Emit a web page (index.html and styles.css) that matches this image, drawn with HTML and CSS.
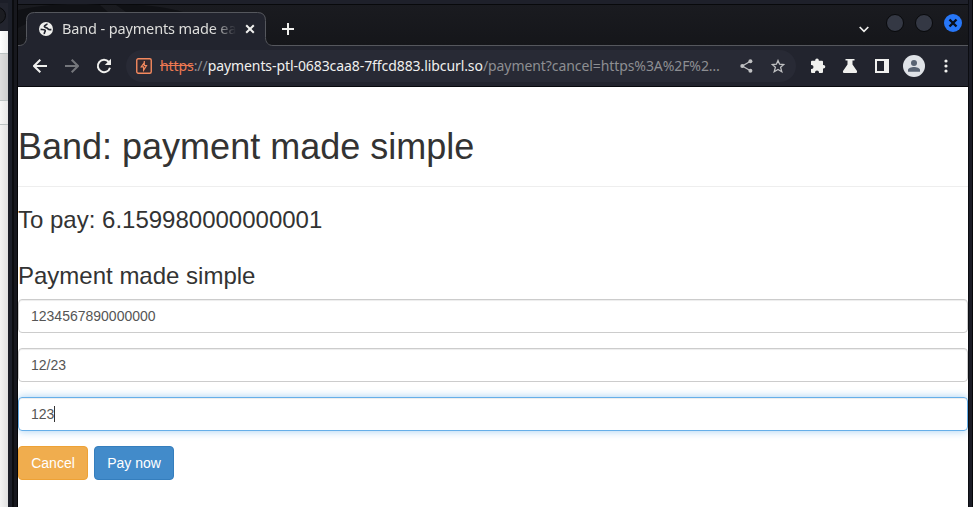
FILE: index.html
```html
<!DOCTYPE html>
<html lang="en">
<head>
<meta charset="utf-8">
<title>Band - payments made easy</title>
<link rel="stylesheet" href="styles.css">
</head>
<body>
<div class="desktop">
  <aside class="behind">
    <div class="behind-top"><i class="behind-dot"></i></div>
    <div class="behind-row behind-tab"></div>
    <div class="behind-row behind-bar"></div>
    <div class="behind-row behind-tools"></div>
    <div class="behind-body"></div>
  </aside>
  <div class="edge edge-left"></div>
  <main class="window">
    <div class="tabstrip">
      <svg class="tab-shape" width="950" height="42" viewBox="0 0 950 42">
        <path class="swirl" d="M0 6C25 1 55-2 82 1L90 8H22C14 8 8 14 8 20L0 24ZM98 1 108 8H165C150 4 130 0 98 1Z"/>
        <path class="tab-fill" d="M0 41.500H1C6 41.500 8.500 38 8.500 33.500V16.500Q8.500 8.500 16.500 8.500H239.500Q247.500 8.500 247.500 16.500V33.500C247.500 38 250 41.500 255 41.500H950V43H0Z"/>
        <path class="tab-line" d="M0 41.500H1C6 41.500 8.500 38 8.500 33.500V16.500Q8.500 8.500 16.500 8.500H239.500Q247.500 8.500 247.500 16.500V33.500C247.500 38 250 41.500 255 41.500H950"/>
      </svg>
      <div class="tab">
        <svg class="globe" width="14" height="14" viewBox="0 0 14 14"><circle cx="7" cy="7" r="7" fill="#f0f0ee"/><path d="M8.200 1.600C8 3 5.300 2.900 5.300 4.600 5.300 6 8.500 5.200 9 7 9.800 7.900 11 7.500 12.400 7.600M1.600 7.400C3.500 7.600 6.300 7 6.300 8.800 6.300 9.700 5 10 5.300 12.200" fill="none" stroke="#22242e" stroke-width="1.600"/></svg>
        <span class="tab-title">Band - payments made eas</span>
        <svg class="tab-close" width="10" height="10" viewBox="0 0 10 10"><path d="M1.200 1.200 8.800 8.800M8.800 1.200 1.200 8.800"/></svg>
      </div>
      <svg class="new-tab" width="12" height="12" viewBox="0 0 12 12"><path d="M6 0V12M0 6H12"/></svg>
      <div class="controls">
        <svg class="chevron" width="10" height="7" viewBox="0 0 10 7"><path d="M.7 1 5 5.300 9.300 1"/></svg>
        <i class="dot"></i><i class="dot"></i>
        <svg class="win-close" width="18" height="18" viewBox="0 0 18 18"><circle cx="9" cy="9" r="9" fill="#2777f8"/><path d="M5.500 5.500 12.500 12.500M12.500 5.500 5.500 12.500" stroke="#080e1c" stroke-width="2.400"/></svg>
      </div>
    </div>
    <div class="toolbar">
      <svg class="nav back" width="14" height="14" viewBox="0 0 14 14"><path d="M14 7H1M7.300.7 1 7 7.300 13.300"/></svg>
      <svg class="nav forward" width="14" height="14" viewBox="0 0 14 14"><path d="M0 7H13M6.700.7 13 7 6.700 13.300"/></svg>
      <svg class="nav reload" width="16" height="16" viewBox="0 0 16 16"><path d="M12.800 4A6.200 6.200 0 1 0 14 9.700"/><path class="solid" d="M15 .8V7H8.800Z"/></svg>
      <div class="address">
        <svg class="badge" width="16" height="16" viewBox="0 0 16 16"><rect x=".75" y=".75" width="14.500" height="14.500" rx="1.500" fill="#33292f" stroke="#f4895f" stroke-width="1.400"/><path d="M8.300 3V7.500H10.500L7.600 12.200V8.800H5.200L8.300 4.500" fill="none" stroke="#f4895f" stroke-width="1.200"/></svg>
        <span class="url"><s>https</s><span class="dim">://</span><span class="host">payments-ptl-0683caa8-7ffcd883.libcurl.so</span><span class="dim">/payment?cancel=https%3A%2F%2…</span></span>
        <svg class="share" width="13" height="14" viewBox="0 0 13 14"><path d="M10.500 2.200 2.300 7 10.500 11.800" fill="none" stroke="#c0c1c3" stroke-width="1.300"/><g fill="#c0c1c3"><circle cx="10.400" cy="2.300" r="2"/><circle cx="2.300" cy="7" r="2"/><circle cx="10.400" cy="11.700" r="2"/></g></svg>
        <svg class="star" width="14" height="14" viewBox="0 0 14 14"><path d="M7 1.500 8.600 5.200 12.800 5.500 9.600 8.300 10.800 12.700 7 10.400 3.200 12.700 4.400 8.300 1.200 5.500 5.400 5.200Z"/></svg>
      </div>
      <div class="actions">
        <svg width="16" height="16" viewBox="0 0 16 16"><path d="M1 3.800Q1 2.800 2 2.800H5.200V2.200A1.800 1.800 0 0 1 8.800 2.200V2.800H12Q13 2.800 13 3.800V7H13.500A1.800 1.800 0 0 1 13.500 10.600H13V14Q13 15 12 15H9V14.500A2 2 0 0 0 5 14.500V15H2Q1 15 1 14V11H1.500A2 2 0 0 0 1.500 7H1Z"/></svg>
        <svg width="16" height="16" viewBox="0 0 16 16"><path d="M3.500 1H12.500V2.500H10.500V6.500L15 13Q15.600 15 14 15H2Q.4 15 1 13L5.500 6.500V2.500H3.500Z"/></svg>
        <svg width="16" height="16" viewBox="0 0 16 16"><path fill-rule="evenodd" d="M1 1H15V15H1ZM3 3V13H10V3Z"/></svg>
        <svg class="avatar" width="22" height="22" viewBox="0 0 22 22"><circle cx="11" cy="11" r="11" fill="#dfe2e7"/><circle cx="11" cy="8" r="3" fill="#596373"/><path d="M5 16.800V15C5 13 8.500 12 11 12S17 13 17 15V16.800Z" fill="#596373"/></svg>
        <svg class="more" width="4" height="14" viewBox="0 0 4 14"><circle cx="2" cy="2" r="1.600"/><circle cx="2" cy="7" r="1.600"/><circle cx="2" cy="12" r="1.600"/></svg>
      </div>
    </div>
    <section class="page">
      <h1>Band: payment made simple</h1>
      <h3 class="total">To pay: 6.159980000000001</h3>
      <h3 class="form-title">Payment made simple</h3>
      <div class="field">1234567890000000</div>
      <div class="field">12/23</div>
      <div class="field focused">123<i class="caret"></i></div>
      <div class="buttons"><button class="btn cancel">Cancel</button><button class="btn pay">Pay now</button></div>
    </section>
  </main>
  <div class="edge edge-right"></div>
</div>
</body>
</html>
```
FILE: styles.css
```css
* { box-sizing: border-box; }
body { margin: 0; overflow: hidden; background: #1c1e28; font-family: "Liberation Sans", Arial, sans-serif; }
svg { display: block; flex: none; }
.desktop { display: grid; grid-template-columns: 8px 10px 950px 5px; height: 507px; }
.behind { display: flex; flex-direction: column; overflow: hidden; }
.behind-top { height: 31px; background: #22242e; border-top: 3px solid #1c1e28; }
.behind-dot { display: block; width: 17px; height: 17px; margin: 4px 0 0 -11px; border: 1px solid #08090c; border-radius: 50%; background: #1b1c21; }
.behind-row { border-bottom: 1px solid #bcc3c3; }
.behind-tab { height: 23px; background: linear-gradient(90deg, #fff, #eee); }
.behind-bar { height: 47px; background: linear-gradient(90deg, #dedede, #cecece); }
.behind-tools { height: 24px; background: linear-gradient(90deg, #f7f7f7, #e6e6e6); }
.behind-body { flex: 1; background: linear-gradient(90deg, #f4f4f4, #e1e1e1); }
.edge-left { border-left: 4px solid #1c1f29; border-right: 1px solid #050507; background: linear-gradient(90deg, #0b0c0f 2px, #17181e 2px); }
.edge-right { border-left: 1px solid #0c0d12; border-right: 1px solid #07080b; background: #1b1d27; }
.window { display: flex; flex-direction: column; min-width: 0; border-top: 4px solid #1e202a; }
.tabstrip { position: relative; display: flex; align-items: flex-start; height: 42px; background: linear-gradient(#1a1b20, #15161a); border-top: 1px solid #08090b; }
.tab-shape { position: absolute; left: 0; top: -1px; }
.swirl { fill: #101115; }
.tab-fill { fill: #22242e; }
.tab-line { fill: none; stroke: #55575d; stroke-width: 1; }
.tab { position: relative; display: flex; align-items: center; width: 240px; height: 33px; margin: 7px 0 0 8px; padding-left: 13px; }
.tab-title { width: 176px; height: 22px; margin: -2px 0 0 9px; overflow: hidden; white-space: nowrap; font: 14.500px/22px "Noto Sans", sans-serif; letter-spacing: -.14px; color: #dededc; -webkit-mask-image: linear-gradient(90deg, #000 151px, transparent 174px); mask-image: linear-gradient(90deg, #000 151px, transparent 174px); }
.tab-close { margin-left: 7px; }
.tab-close path, .new-tab path, .chevron path { fill: none; stroke: #f0f0ee; stroke-width: 2; }
.new-tab { position: relative; margin: 18px 0 0 16px; }
.controls { position: relative; display: flex; align-items: flex-start; margin: 9px 6px 0 auto; }
.chevron { margin: 12px 17px 0 0; }
.chevron path { stroke-width: 1.700; }
.dot { width: 18px; height: 18px; margin-right: 11px; border: 1px solid #08090b; border-radius: 50%; background: #343844; }
.toolbar { display: flex; align-items: center; height: 41px; padding: 0 0 1px 15px; background: #22242e; border-bottom: 1px solid #08090d; flex: none; }
.nav path { fill: none; stroke: #f0f0ee; stroke-width: 2; }
.forward { margin-left: 18px; opacity: .4; }
.reload { margin-left: 17px; }
.nav .solid { fill: #f0f0ee; stroke: none; }
.address { display: flex; align-items: center; width: 670px; height: 32px; margin-left: 14px; padding-left: 10px; border-radius: 16px; background: #282a35; }
.url { width: 562px; margin-left: 8px; white-space: nowrap; font: 14px/20px "Noto Sans", sans-serif; letter-spacing: -.08px; color: #f0f0ee; }
.url s { color: #ee7952; }
.url .dim { color: #8d8e92; }
.share { margin-left: 18px; }
.star { margin-left: 18px; }
.star path { fill: none; stroke: #c0c1c3; stroke-width: 1.300; }
.actions { display: flex; align-items: center; gap: 16px; margin-left: 14px; fill: #f0f0ee; }
.avatar { margin-left: -3px; }
.more { margin-left: 3px; }
.page { flex: 1; overflow: hidden; background: #fff; color: #333; }
h1, h3 { font-weight: 500; line-height: 1.100; }
h1 { height: 60px; margin: 40px 0 0; border-bottom: 1px solid #eee; font-size: 36px; }
.total { margin: 20px 0 0; font-size: 24px; }
.form-title { margin: 30px 0 9px; font-size: 24px; }
.field { display: flex; align-items: center; height: 34px; margin-bottom: 15px; padding: 0 12px; border: 1px solid #ccc; border-radius: 4px; box-shadow: inset 0 1px 1px rgba(0,0,0,.075); color: #555; font-size: 14px; }
.focused { border-color: #66afe9; box-shadow: inset 0 1px 1px rgba(0,0,0,.075), 0 0 8px rgba(102,175,233,.6); }
.caret { width: 1px; height: 16px; background: #333; }
.buttons { display: flex; gap: 6px; }
.btn { height: 34px; padding: 0; border: 1px solid; border-radius: 4px; font: 14px/20px "Liberation Sans", Arial, sans-serif; color: #fff; }
.cancel { width: 70px; background: #f0ad4e; border-color: #eea236; }
.pay { width: 80px; background: #428bca; border-color: #357ebd; }
```
